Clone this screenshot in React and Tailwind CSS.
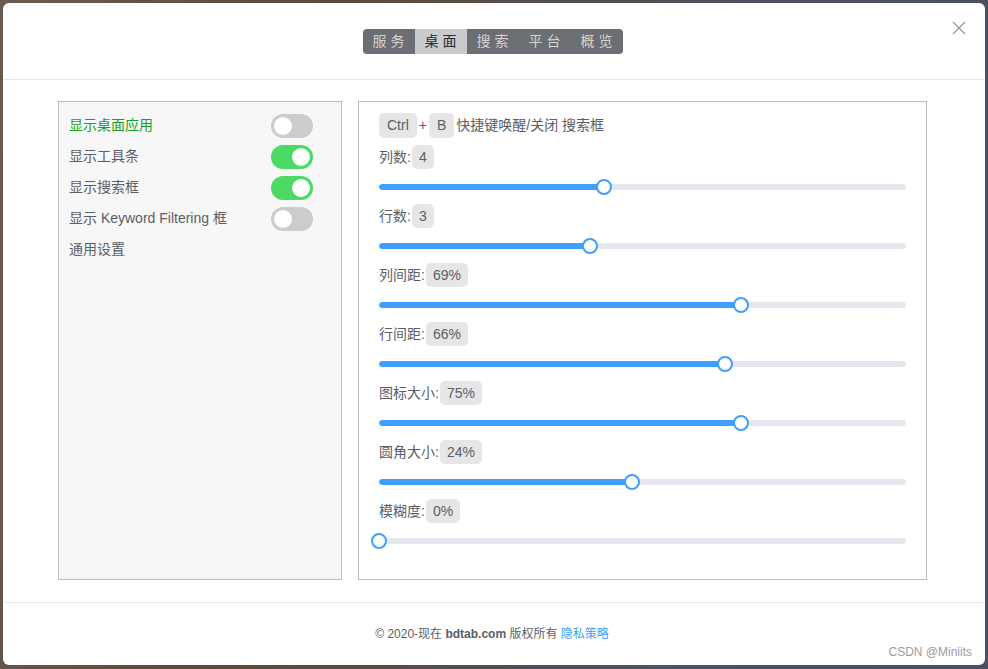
import { useState } from 'react';

const font = { fontFamily: '"Liberation Sans", "Noto Sans CJK SC", sans-serif' };

const tabs = ['服务', '桌面', '搜索', '平台', '概览'];

const toggles = [
  { label: '显示桌面应用', on: false, active: true },
  { label: '显示工具条', on: true },
  { label: '显示搜索框', on: true },
  { label: '显示 Keyword Filtering 框', on: false },
];

const sliders = [
  { label: '列数:', value: '4', pct: 42.7 },
  { label: '行数:', value: '3', pct: 40 },
  { label: '列间距:', value: '69%', pct: 68.7 },
  { label: '行间距:', value: '66%', pct: 65.7 },
  { label: '图标大小:', value: '75%', pct: 68.7 },
  { label: '圆角大小:', value: '24%', pct: 48 },
  { label: '模糊度:', value: '0%', pct: 0 },
];

const Switch = ({ on }) => (
  <div
    className={`w-[42px] h-[24px] rounded-full p-[3px] flex ${
      on ? 'bg-[#4cd964] justify-end' : 'bg-[#cccccc] justify-start'
    }`}
  >
    <div className="w-[18px] h-[18px] rounded-full bg-white" />
  </div>
);

const Slider = ({ pct }) => (
  <div className="relative h-[14px] mt-[11px] mb-[10px] flex items-center">
    <div className="w-full h-[6px] rounded-full bg-[#e4e7ed] overflow-hidden">
      <div className="h-full bg-[#409eff] rounded-full" style={{ width: `${pct}%` }} />
    </div>
    <div
      className="absolute top-1/2 w-[16px] h-[16px] -ml-[8px] -mt-[8px] rounded-full bg-white border-2 border-[#409eff]"
      style={{ left: `${pct}%` }}
    />
  </div>
);

const Badge = ({ children }) => (
  <span className="inline-flex items-center h-[24px] px-[7px] rounded-[5px] bg-[#e6e6e6] text-[#5a5e66]">
    {children}
  </span>
);

const App = () => {
  const [tab, setTab] = useState(1);

  return (
    <div
      className="w-[988px] h-[669px] p-[3px] pb-[4px] bg-[linear-gradient(100deg,#6b5a52_0%,#5a4a3a_30%,#4e5262_70%,#4a5060_100%)] relative"
      style={font}
    >
      <div className="w-full h-full bg-white rounded-[6px] flex flex-col overflow-hidden">
        {/* Header */}
        <div className="relative h-[77px] border-b border-[#e8e8e8] flex justify-center pt-[26px] pr-[3px]">
          <div className="flex h-[25px] rounded-[4px] overflow-hidden bg-[#6b6e72] text-[14px]">
            {tabs.map((t, i) => (
              <button
                key={t}
                onClick={() => setTab(i)}
                className={`w-[52px] h-full flex items-center justify-center tracking-[4px] pl-[4px] ${
                  tab === i ? 'bg-[#c9cbce] text-[#2a2a2a]' : 'text-[#d4d4d4]'
                }`}
              >
                {t}
              </button>
            ))}
          </div>
          <button className="absolute right-[18px] top-[17px] p-[1px]">
            <svg width="14" height="14" viewBox="0 0 14 14" stroke="#9a9a9a" strokeWidth="1.3">
              <path d="M1 1 L13 13 M13 1 L1 13" />
            </svg>
          </button>
        </div>

        {/* Body */}
        <div className="flex-1 flex gap-[16px] px-[55px] pt-[21px] pb-[22px]">
          <div className="w-[284px] border border-[#bdbdbd] bg-[#f7f7f7] pt-[8px] pl-[10px] pr-[28px] text-[14px]">
            {toggles.map((t) => (
              <div key={t.label} className="h-[31px] flex items-center justify-between">
                <span className={t.active ? 'text-[#1aa01a]' : 'text-[#5a5e66]'}>{t.label}</span>
                <Switch on={t.on} />
              </div>
            ))}
            <div className="h-[31px] flex items-center text-[#5a5e66]">通用设置</div>
          </div>

          <div className="w-[569px] border border-[#bdbdbd] bg-white pt-[11px] px-[20px] text-[14px] text-[#5a5e66]">
            <div className="h-[25px] flex items-center">
              <span className="inline-flex items-center h-[25px] px-[8px] rounded-[5px] bg-[#e6e6e6]">Ctrl</span>
              <span className="mx-[2px]">+</span>
              <span className="inline-flex items-center h-[25px] px-[8px] rounded-[5px] bg-[#e6e6e6]">B</span>
              <span className="ml-[2px]">快捷键唤醒/关闭 搜索框</span>
            </div>
            <div className="mt-[7px]">
              {sliders.map((s) => (
                <div key={s.label}>
                  <div className="h-[24px] flex items-center">
                    <span className="mr-[1px]">{s.label}</span>
                    <Badge>{s.value}</Badge>
                  </div>
                  <Slider pct={s.pct} />
                </div>
              ))}
            </div>
          </div>
        </div>

        {/* Footer */}
        <div className="h-[63px] border-t border-[#e8e8e8] flex items-center justify-center text-[12px] text-[#5a5e66] pr-[4px]">
          <span>
            © 2020-现在 <b className="font-bold">bdtab.com</b> 版权所有{' '}
            <a className="text-[#409eff]">隐私策略</a>
          </span>
        </div>
      </div>

      <div className="absolute right-[16px] bottom-[8px] text-[12px] text-[#9c9c9c]">CSDN @Miniits</div>
    </div>
  );
};

export default App;
